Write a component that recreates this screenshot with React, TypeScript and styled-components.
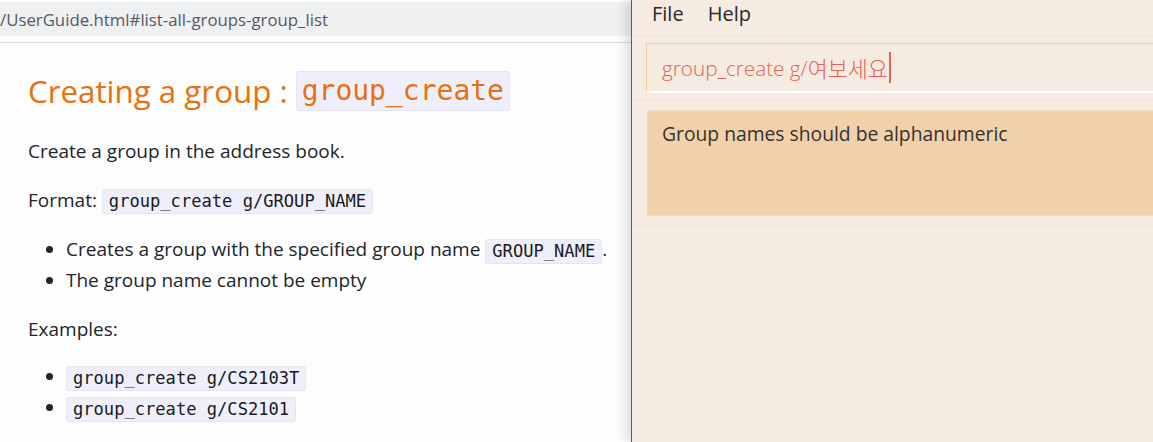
import React from "react";
import styled, { createGlobalStyle } from "styled-components";

const Global = createGlobalStyle`
  html, body { margin: 0; padding: 0; }
  body {
    width: 1153px;
    height: 442px;
    overflow: hidden;
    background: #fdfdfd;
    font-family: "Open Sans", "Noto Sans", sans-serif;
  }
`;

const Screen = styled.div`
  display: flex;
  width: 1153px;
  height: 442px;
  overflow: hidden;
`;

const Browser = styled.div`
  flex: 0 0 631px;
  display: flex;
  flex-direction: column;
  background: #fdfdfd;
  color: #212529;
`;

const AddressBar = styled.div`
  height: 34px;
  margin-top: 2px;
  background: #eff0f2;
  display: flex;
  align-items: center;
  font-size: 16.8px;
  color: #555a60;
  white-space: nowrap;
`;

const Divider = styled.div`
  height: 1px;
  margin-top: 6px;
  background: #dcdcdc;
`;

const Article = styled.div`
  padding: 28px 0 0 28px;
  font-size: 19px;
  line-height: 27px;
`;

const Title = styled.h2`
  margin: 0;
  display: flex;
  align-items: center;
  height: 40px;
  font-weight: 400;
  font-size: 31.3px;
  color: #e8700f;
`;

const Code = styled.code<{ $big?: boolean }>`
  display: inline-block;
  font-family: "DejaVu Sans Mono", "Liberation Mono", monospace;
  font-size: ${(p) => (p.$big ? "28px" : "17.1px")};
  line-height: ${(p) => (p.$big ? "38px" : "23px")};
  padding: 0 ${(p) => (p.$big ? "5px" : "6px")};
  background: #efeffc;
  border: 1px solid #e4e4f2;
  border-radius: 3px;
  color: ${(p) => (p.$big ? "#e8700f" : "#1a1a1a")};
  vertical-align: middle;
`;

const Para = styled.p<{ $top: number }>`
  margin: ${(p) => p.$top}px 0 0;
`;

const List = styled.ul<{ $top: number }>`
  margin: ${(p) => p.$top}px 0 0;
  padding-left: 38px;
`;

const Item = styled.li`
  line-height: 31px;
`;

const Gap = styled.span`
  display: inline-block;
  width: 8px;
`;

const AppWindow = styled.div`
  flex: 0 0 600px;
  display: flex;
  flex-direction: column;
  background: #f5ebe0;
  border-left: 1px solid #5e5e5e;
  box-shadow: -6px 0 10px rgba(0, 0, 0, 0.12);
  font-family: "Open Sans", "Noto Sans", "Noto Sans CJK KR", sans-serif;
  position: relative;
`;

const MenuBar = styled.div`
  height: 35px;
  display: flex;
  align-items: center;
  gap: 24px;
  padding-left: 20px;
  font-size: 20px;
  color: #2a2a2a;
  border-bottom: 1px solid #efe2d4;
  box-sizing: content-box;
`;

const MenuItem = styled.span`
  margin-top: -8px;
`;

const CommandSection = styled.div`
  padding: 7px 0 6px 14px;
  border-bottom: 1px solid #efe2d4;
`;

const CommandInput = styled.div`
  height: 47px;
  border-top: 1px solid #f6c898;
  border-left: 1px solid #f6c898;
  border-bottom: 2px solid #ffffff;
  display: flex;
  align-items: center;
  padding-left: 15px;
  font-size: 20.7px;
  font-weight: 300;
  color: #e2645a;
`;

const Korean = styled.span`
  font-family: "Noto Sans CJK KR", sans-serif;
  font-size: 21.8px;
  font-weight: 300;
`;

const Caret = styled.span`
  display: inline-block;
  width: 2px;
  height: 31px;
  background: #d9675c;
  margin-left: 1px;
`;

const ResultSection = styled.div`
  padding: 10px 0 9px 15px;
  border-bottom: 1px solid #efe2d4;
`;

const ResultBox = styled.div`
  height: 106px;
  background: #f2d0a9;
  border: 1px solid #f1dcc3;
  border-right: none;
  padding: 9px 0 0 14px;
  box-sizing: border-box;
  font-size: 19.3px;
  color: #333333;
`;

export default function App() {
  return (
    <>
      <Global />
      <Screen>
        <Browser>
          <AddressBar>/UserGuide.html#list-all-groups-group_list</AddressBar>
          <Divider />
          <Article>
            <Title>
              Creating a group :<Gap />
              <Code $big>group_create</Code>
            </Title>
            <Para $top={27}>Create a group in the address book.</Para>
            <Para $top={22}>
              Format: <Code>group_create g/GROUP_NAME</Code>
            </Para>
            <List $top={20}>
              <Item>
                Creates a group with the specified group name <Code>GROUP_NAME</Code>.
              </Item>
              <Item>The group name cannot be empty</Item>
            </List>
            <Para $top={20}>Examples:</Para>
            <List $top={18}>
              <Item>
                <Code>group_create g/CS2103T</Code>
              </Item>
              <Item>
                <Code>group_create g/CS2101</Code>
              </Item>
            </List>
          </Article>
        </Browser>
        <AppWindow>
          <MenuBar>
            <MenuItem>File</MenuItem>
            <MenuItem>Help</MenuItem>
          </MenuBar>
          <CommandSection>
            <CommandInput>
              group_create g/<Korean>여보세요</Korean>
              <Caret />
            </CommandInput>
          </CommandSection>
          <ResultSection>
            <ResultBox>Group names should be alphanumeric</ResultBox>
          </ResultSection>
        </AppWindow>
      </Screen>
    </>
  );
}
